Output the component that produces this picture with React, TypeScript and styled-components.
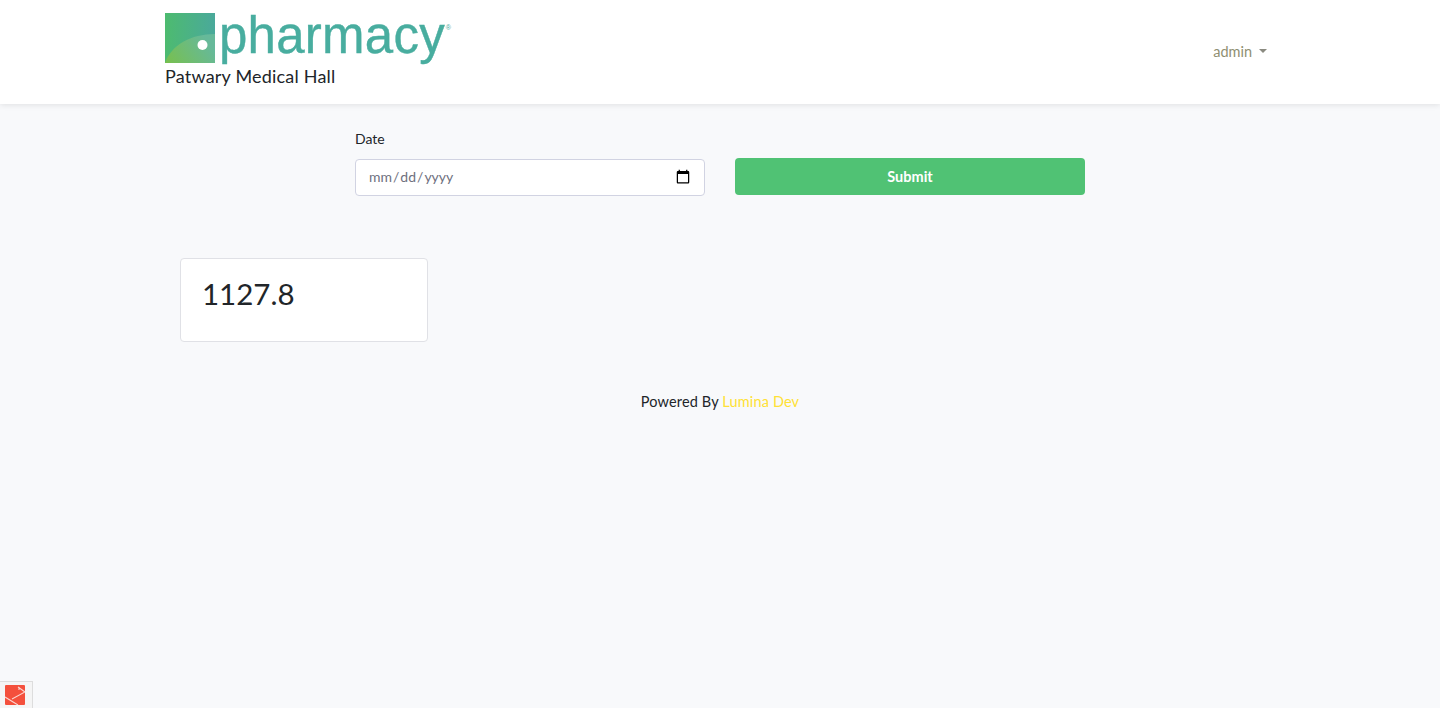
import React from "react";
import styled, { createGlobalStyle } from "styled-components";

const GlobalStyle = createGlobalStyle`
  html, body {
    margin: 0;
    padding: 0;
    background: #f8f9fb;
    font-family: "Lato", "Noto Sans", sans-serif;
    color: #212529;
  }
  * { box-sizing: border-box; }
`;

const Navbar = styled.nav`
  height: 104px;
  background: #fff;
  box-shadow: 0 1px 6px rgba(0, 0, 0, 0.1);
`;

const NavInner = styled.div`
  width: 1140px;
  height: 100%;
  margin: 0 auto;
  padding: 0 23px 0 15px;
  display: flex;
  justify-content: space-between;
  align-items: center;
`;

const Brand = styled.div`
  display: flex;
  flex-direction: column;
`;

const LogoRow = styled.div`
  display: flex;
  height: 50px;
  gap: 4px;
  margin-top: -2px;
`;

const LogoText = styled.span`
  font-family: "Liberation Sans", Arial, sans-serif;
  font-size: 51px;
  line-height: 45px;
  height: 45px;
  letter-spacing: 0.25px;
  color: #48ad9f;
  -webkit-text-stroke: 0.4px #48ad9f;
  position: relative;
`;

const Registered = styled.sup`
  position: absolute;
  top: 11px;
  right: -6px;
  font-size: 7px;
  line-height: 8px;
  letter-spacing: 0;
  -webkit-text-stroke: 0;
`;

const BrandName = styled.div`
  font-size: 18px;
  line-height: 26px;
  letter-spacing: 0.2px;
  color: #212529;
`;

const UserMenu = styled.div`
  display: flex;
  align-items: center;
  gap: 7px;
  font-size: 14.5px;
  color: #8f8f72;
  margin-top: -2px;
`;

const Caret = styled.span`
  width: 0;
  height: 0;
  border-top: 4.5px solid #8a8a80;
  border-left: 4.5px solid transparent;
  border-right: 4.5px solid transparent;
`;

const Main = styled.main`
  width: 1140px;
  margin: 0 auto;
`;

const FormRow = styled.form`
  display: flex;
  justify-content: center;
  align-items: flex-end;
  gap: 30px;
  padding-top: 25px;
`;

const Field = styled.div`
  width: 350px;
  display: flex;
  flex-direction: column;
`;

const Label = styled.label`
  font-size: 14px;
  line-height: 19px;
  margin-bottom: 11px;
  color: #212529;
`;

const DateInput = styled.input`
  width: 350px;
  height: 37px;
  padding: 0 14px 2px 12px;
  font-family: inherit;
  font-size: 14px;
  color: #6e707e;
  background: #fff;
  border: 1px solid #d1d3e2;
  border-radius: 4px;

  &::-webkit-calendar-picker-indicator {
    width: 16px;
    height: 18px;
    margin: 2px -1px 0 0;
    padding: 0;
  }
`;

const SubmitButton = styled.button`
  width: 350px;
  height: 37px;
  margin-bottom: 1px;
  padding: 0 0 1px;
  border: none;
  border-radius: 4px;
  background: #50c274;
  color: #fff;
  font-family: inherit;
  font-size: 14.5px;
  font-weight: 700;
`;

const Card = styled.div`
  width: 248px;
  height: 84px;
  margin: 62px 0 0 30px;
  padding: 15px 21px;
  background: #fff;
  border: 1px solid #e0e1e6;
  border-radius: 4px;
  font-size: 29.5px;
  line-height: 40px;
  color: #212529;
`;

const Footer = styled.footer`
  margin-top: 50px;
  text-align: center;
  font-size: 14.5px;
  line-height: 19px;
  letter-spacing: 0.15px;
  color: #212529;
`;

const Vendor = styled.span`
  color: #ffe135;
`;

const DebugTab = styled.div`
  position: fixed;
  left: 0;
  bottom: 0;
  width: 33px;
  height: 27px;
  padding: 3px 0 0 5px;
  background: #f5f5f5;
  border: 1px solid #ddd;
  border-left: none;
  border-bottom: none;
`;

const LogoMark = () => (
  <svg width="50" height="50" viewBox="0 0 50 50">
    <defs>
      <linearGradient id="markBase" x1="0" y1="0" x2="1" y2="0">
        <stop offset="0" stopColor="#4dbb6f" />
        <stop offset="1" stopColor="#4aa99b" />
      </linearGradient>
      <linearGradient id="markArc" x1="0" y1="1" x2="1" y2="0.6">
        <stop offset="0" stopColor="#78c04c" />
        <stop offset="1" stopColor="#66b99a" />
      </linearGradient>
    </defs>
    <rect width="50" height="50" fill="url(#markBase)" />
    <path d="M0 50C6 32 26 21 50 21V50Z" fill="url(#markArc)" />
    <circle cx="37.5" cy="32" r="5" fill="#fff" />
  </svg>
);

const DebugLogo = () => (
  <svg width="20" height="20" viewBox="0 0 20 20">
    <rect width="20" height="20" rx="1" fill="#f4503c" />
    <path
      d="M0 12L13 20M7 14L20 7M13 2L20 7M14 2V5"
      stroke="#fbd5cf"
      strokeWidth="1.1"
      fill="none"
    />
  </svg>
);

export default function App() {
  return (
    <>
      <GlobalStyle />
      <Navbar>
        <NavInner>
          <Brand>
            <LogoRow>
              <LogoMark />
              <LogoText>
                pharmacy
                <Registered>®</Registered>
              </LogoText>
            </LogoRow>
            <BrandName>Patwary Medical Hall</BrandName>
          </Brand>
          <UserMenu>
            admin
            <Caret />
          </UserMenu>
        </NavInner>
      </Navbar>
      <Main>
        <FormRow>
          <Field>
            <Label htmlFor="date">Date</Label>
            <DateInput id="date" type="date" />
          </Field>
          <SubmitButton type="button">Submit</SubmitButton>
        </FormRow>
        <Card>1127.8</Card>
        <Footer>
          Powered By <Vendor>Lumina Dev</Vendor>
        </Footer>
      </Main>
      <DebugTab>
        <DebugLogo />
      </DebugTab>
    </>
  );
}
